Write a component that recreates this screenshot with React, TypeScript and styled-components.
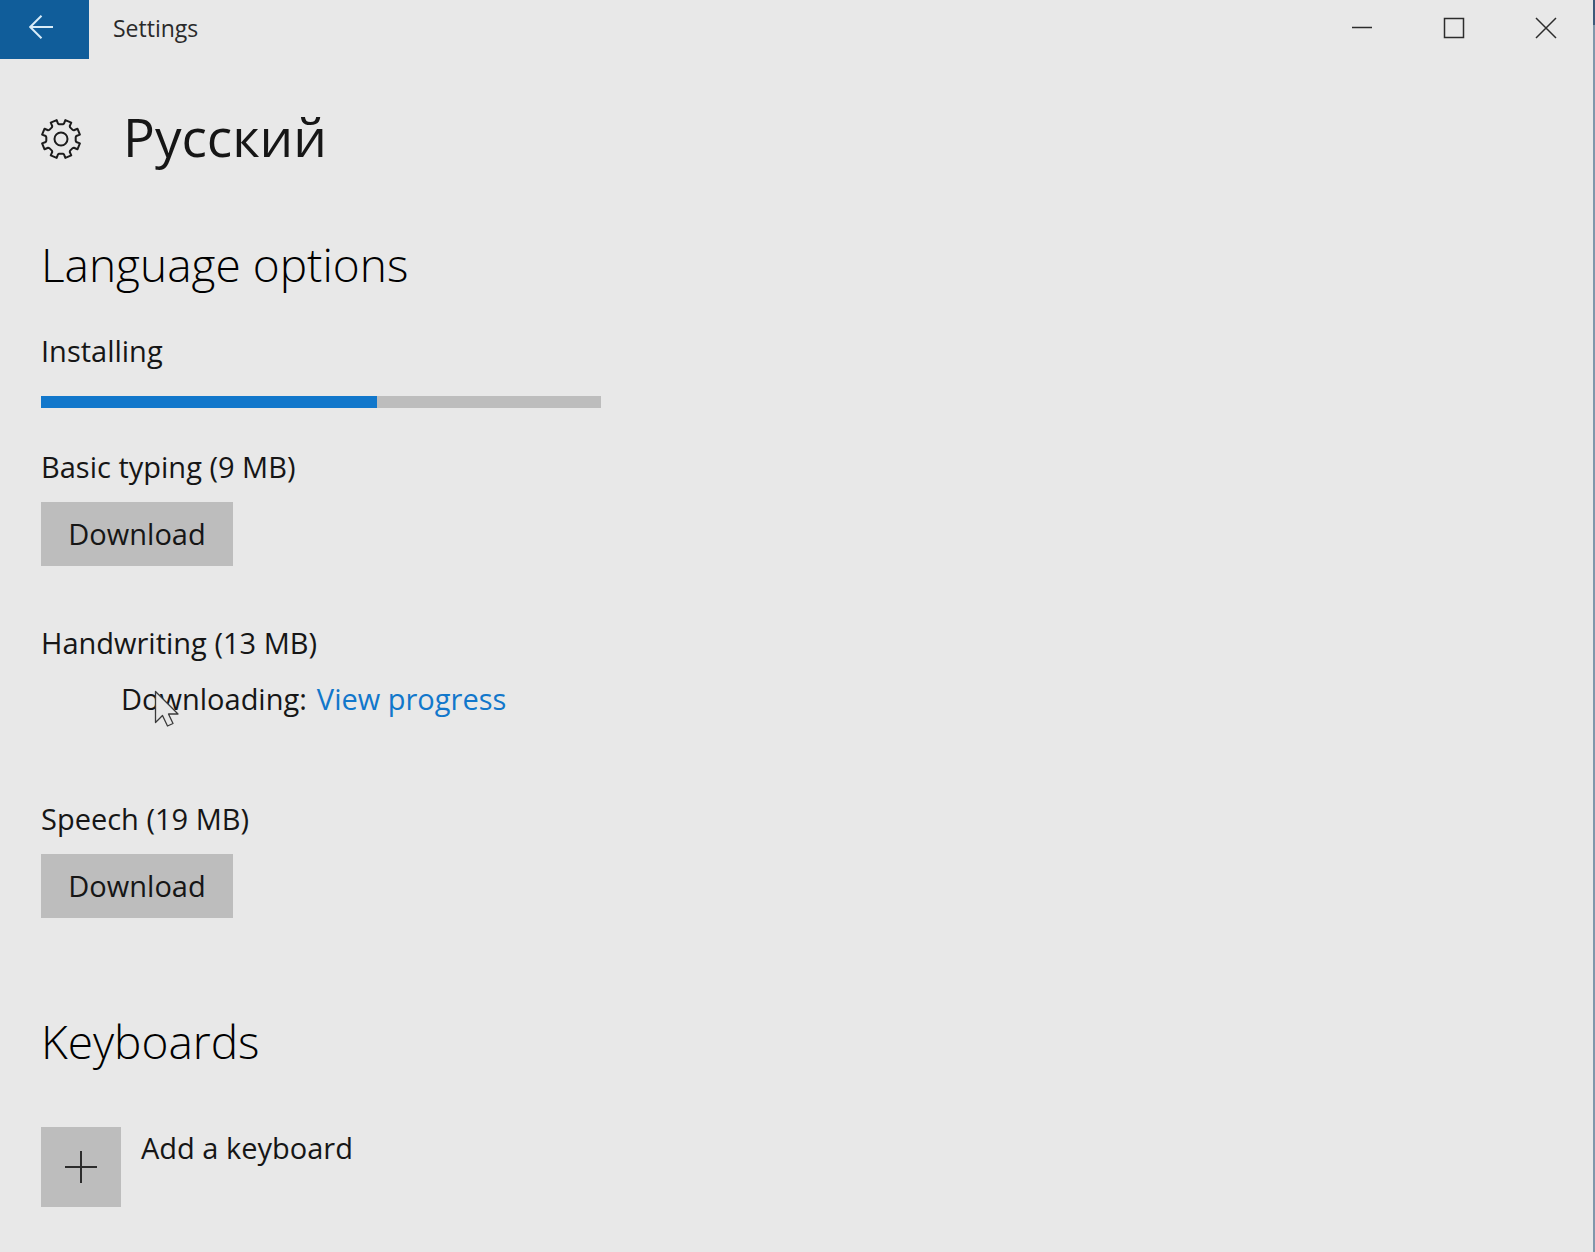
import React from "react";
import styled, { createGlobalStyle } from "styled-components";

const color = {
  page: "#e8e8e8",
  text: "#161616",
  heading: "#000000",
  control: "#bdbdbd",
  accent: "#1177cb",
  back: "#105d9a",
};

const GlobalStyle = createGlobalStyle`
  *, *::before, *::after { box-sizing: border-box; }
  html, body { margin: 0; background: ${color.page}; }
  body {
    font-family: "Open Sans", "Noto Sans", sans-serif;
    font-size: 29px;
    line-height: 42px;
    color: ${color.text};
  }
  button { font: inherit; color: inherit; border: 0; padding: 0; cursor: default; }
  svg { display: block; }
`;

const Window = styled.div`
  position: relative;
  min-height: 100vh;
  overflow: hidden;
  background: ${color.page};
`;

const WindowEdge = styled.div`
  position: absolute;
  top: 0;
  right: 0;
  bottom: 0;
  width: 2px;
  background: linear-gradient(#3d5a7a 0 25px, #7f97ab 25px);
`;

const TitleBar = styled.header`
  display: flex;
  align-items: flex-start;
  height: 59px;
  padding-right: 3px;
`;

const BackButton = styled.button`
  display: flex;
  align-items: center;
  justify-content: center;
  width: 89px;
  height: 59px;
  padding: 0 7px 6px 0;
  background: ${color.back};
  color: #d8ecf8;
`;

const WindowTitle = styled.span`
  flex: 1;
  padding-left: 24px;
  font-size: 23px;
  line-height: 56px;
  color: #2a2a2a;
`;

const CaptionButton = styled.button`
  display: flex;
  align-items: center;
  justify-content: center;
  width: 92px;
  height: 56px;
  background: transparent;
`;

const Content = styled.main`
  padding: 37px 41px 44px;
`;

const PageHeader = styled.div`
  display: flex;
  align-items: center;
  gap: 42px;
  margin-bottom: 54px;
`;

const PageTitle = styled.h1`
  margin: 0;
  font-size: 53px;
  font-weight: 400;
  line-height: 82px;
`;

const Section = styled.section`
  & + & { margin-top: 91px; }
`;

const SectionTitle = styled.h2<{ $gap: number }>`
  margin: 0 0 ${(p) => p.$gap}px;
  font-size: 46px;
  font-weight: 300;
  line-height: 64px;
  color: ${color.heading};
`;

const InstallStatus = styled.div`
  display: flex;
  flex-direction: column;
  gap: 24px;
  margin-bottom: 38px;
`;

const ProgressBar = styled.progress`
  appearance: none;
  display: block;
  width: 100%;
  max-width: 560px;
  height: 12px;
  border: 0;
  background: ${color.control};
  &::-webkit-progress-bar { background: ${color.control}; }
  &::-webkit-progress-value { background: ${color.accent}; }
`;

const FeatureList = styled.div`
  display: flex;
  flex-direction: column;
  gap: 56px;
`;

const Feature = styled.div`
  display: flex;
  flex-direction: column;
  align-items: flex-start;
  gap: 14px;
`;

const DownloadButton = styled.button`
  width: 192px;
  height: 64px;
  background: ${color.control};
`;

const DownloadStatus = styled.div`
  position: relative;
  display: flex;
  gap: 10px;
  height: 64px;
  padding-left: 80px;
`;

const ProgressLink = styled.a`
  color: ${color.accent};
  text-decoration: none;
`;

const Pointer = styled.svg`
  position: absolute;
  left: 113px;
  top: 12px;
`;

const AddRow = styled.div`
  display: flex;
  gap: 20px;
`;

const AddButton = styled.button`
  display: flex;
  align-items: center;
  justify-content: center;
  width: 80px;
  height: 80px;
  background: ${color.control};
`;

const AddLabel = styled.label``;

const GearFrame = styled.span`
  padding-top: 4px;
`;

function gearPath() {
  const at = (radius: number, degrees: number) => {
    const a = (degrees * Math.PI) / 180;
    return `${(20 + radius * Math.sin(a)).toFixed(2)} ${(20 - radius * Math.cos(a)).toFixed(2)}`;
  };
  const points: string[] = [];
  for (let tooth = 0; tooth < 8; tooth++) {
    const mid = 22.5 + tooth * 45;
    points.push(at(14.8, mid - 15.5), at(15.6, mid - 11.5), at(19.4, mid - 9.5), at(19.4, mid + 9.5), at(15.6, mid + 11.5), at(14.8, mid + 15.5));
  }
  return `M${points.join("L")}Z`;
}

const GearIcon = () => (
  <svg width="40" height="40" viewBox="0 0 40 40" fill="none" stroke="#1c1c1c" strokeWidth="2" strokeLinejoin="round" overflow="visible" aria-hidden="true">
    <path d={gearPath()} />
    <circle cx="20" cy="20" r="6.5" />
  </svg>
);

const BackIcon = () => (
  <svg width="24" height="24" viewBox="0 0 24 24" fill="none" stroke="currentColor" strokeWidth="2" aria-hidden="true">
    <path d="M24 12H1M12.500 .8L1.200 12l11.300 11.200" />
  </svg>
);

const CaptionIcon = ({ d }: { d: string }) => (
  <svg width="22" height="22" viewBox="0 0 22 22" fill="none" stroke="#2c2c2c" strokeWidth="1.500" aria-hidden="true">
    <path d={d} />
  </svg>
);

const captions = [
  { label: "Minimize", d: "M1 10.500h20" },
  { label: "Maximize", d: "M1.500 1.500h19v19h-19z" },
  { label: "Close", d: "M1 1l20 20M21 1L1 21" },
];

const features = [
  { name: "Basic typing (9 MB)", downloading: false },
  { name: "Handwriting (13 MB)", downloading: true },
  { name: "Speech (19 MB)", downloading: false },
];

export default function App() {
  return (
    <Window>
      <GlobalStyle />
      <TitleBar>
        <BackButton aria-label="Back">
          <BackIcon />
        </BackButton>
        <WindowTitle>Settings</WindowTitle>
        {captions.map((c) => (
          <CaptionButton key={c.label} aria-label={c.label}>
            <CaptionIcon d={c.d} />
          </CaptionButton>
        ))}
      </TitleBar>

      <Content>
        <PageHeader>
          <GearFrame>
            <GearIcon />
          </GearFrame>
          <PageTitle lang="ru">Русский</PageTitle>
        </PageHeader>

        <Section>
          <SectionTitle $gap={34}>Language options</SectionTitle>
          <InstallStatus>
            <label htmlFor="install-progress">Installing</label>
            <ProgressBar id="install-progress" value={60} max={100} />
          </InstallStatus>
          <FeatureList>
            {features.map((f) => (
              <Feature key={f.name}>
                <span>{f.name}</span>
                {f.downloading ? (
                  <DownloadStatus>
                    <span>Downloading:</span>
                    <ProgressLink href="#progress">View progress</ProgressLink>
                    <Pointer width="26" height="38" viewBox="0 0 26 38" fill={color.page} stroke="#3a3a3a" strokeWidth="1.300" strokeLinejoin="round" aria-hidden="true">
                      <path d="M1.500 1.500V32.500L8.500 25.500L13.500 36L19 33.500L14.500 24H24Z" />
                    </Pointer>
                  </DownloadStatus>
                ) : (
                  <DownloadButton>Download</DownloadButton>
                )}
              </Feature>
            ))}
          </FeatureList>
        </Section>

        <Section>
          <SectionTitle $gap={54}>Keyboards</SectionTitle>
          <AddRow>
            <AddButton id="add-keyboard">
              <svg width="32" height="32" viewBox="0 0 32 32" stroke="#2c2c2c" strokeWidth="2" aria-hidden="true">
                <path d="M0 16h32M16 0v32" />
              </svg>
            </AddButton>
            <AddLabel htmlFor="add-keyboard">Add a keyboard</AddLabel>
          </AddRow>
        </Section>
      </Content>
      <WindowEdge />
    </Window>
  );
}
